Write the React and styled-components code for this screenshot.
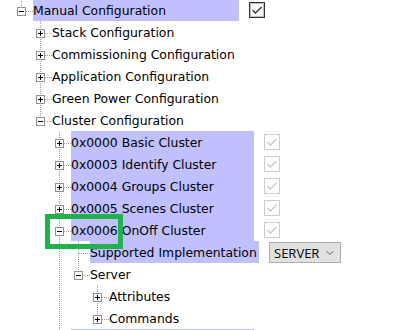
import React from 'react';
import styled, { createGlobalStyle } from 'styled-components';

const GlobalStyle = createGlobalStyle`
html, body {
  margin: 0;
  padding: 0;
  background: #fff;
  overflow: hidden;
}
`;

const Page = styled.div`
position: relative;
width: 404px;
height: 330px;
overflow: hidden;
font-family: "DejaVu Sans", Verdana, sans-serif;
font-size: 12.4px;
color: #000;
`;

const TreeList = styled.div`
display: flex;
flex-direction: column;
margin-top: -1px;
`;

const Row = styled.div`
display: flex;
flex: none;
height: 22px;
padding-left: 12px;
`;

const LineCell = styled.svg`
display: block;
flex: none;
`;

const Label = styled.div`
flex: none;
box-sizing: border-box;
height: 22px;
padding-top: 1px;
line-height: 21px;
white-space: nowrap;
width: ${props => props.$width ? `${props.$width}px` : 'auto'};
background: ${props => props.$width ? '#c0c0ff' : 'transparent'};
`;

const Checkbox = styled.span`
flex: none;
display: flex;
align-items: center;
justify-content: center;
box-sizing: border-box;
width: 16px;
height: 16px;
margin: 3px 0 0 10px;
background: #fff;
border: 1px solid ${props => props.$disabled ? '#cccccc' : '#333333'};
box-shadow: ${props => props.$disabled ? 'none' : 'inset 0 0 0 1px rgba(0, 0, 0, 0.25)'};
`;

const Select = styled.div`
flex: none;
display: flex;
align-items: center;
box-sizing: border-box;
width: 72px;
height: 21px;
margin: 1px 0 0 10px;
padding: 0 6px 0 4px;
border: 1px solid #adadad;
background: #e1e1e1;
font-family: "Open Sans", "Noto Sans", sans-serif;
font-size: 13px;
`;

const Chevron = styled.svg`
display: block;
margin-left: auto;
`;

const Annotation = styled.div`
position: absolute;
left: 45px;
top: 214px;
width: 78px;
height: 35px;
box-sizing: border-box;
border: 5px solid #22b14c;
pointer-events: none;
`;

// the last cluster row only peeks in at the bottom edge, so its text stays empty
const tree = [
    { label: 'Manual Configuration', hl: 206, check: 'enabled', open: true, children: [
        { label: 'Stack Configuration', closed: true },
        { label: 'Commissioning Configuration', closed: true },
        { label: 'Application Configuration', closed: true },
        { label: 'Green Power Configuration', closed: true },
        { label: 'Cluster Configuration', open: true, children: [
            { label: '0x0000 Basic Cluster', hl: 183, check: 'disabled', closed: true },
            { label: '0x0003 Identify Cluster', hl: 183, check: 'disabled', closed: true },
            { label: '0x0004 Groups Cluster', hl: 183, check: 'disabled', closed: true },
            { label: '0x0005 Scenes Cluster', hl: 183, check: 'disabled', closed: true },
            { label: '0x0006 OnOff Cluster', hl: 183, check: 'disabled', open: true, children: [
                { label: 'Supported Implementation', hl: 169, select: 'SERVER' },
                { label: 'Server', open: true, children: [
                    { label: 'Attributes', closed: true },
                    { label: 'Commands', closed: true },
                ] },
            ] },
            { label: '', hl: 183, closed: true },
        ] },
    ] },
];

function flatten(nodes, guides = [], out = []) {
    nodes.forEach((node, i) => {
        const last = i === nodes.length - 1;
        out.push({ ...node, guides, last });
        if (node.open && node.children) {
            flatten(node.children, [...guides, !last], out);
        }
    });
    return out;
}

// dotted tree connector, optionally with the +/- box
function Lines({ up, down, right, expander }) {
    const dot = { stroke: '#a0a0a0', strokeDasharray: '1 1', shapeRendering: 'crispEdges' };
    return (
        <LineCell width={right ? 21 : 19} height="22">
            {(up || down) && (
                <line x1="9.5" y1={up ? 0 : 12} x2="9.5" y2={down ? 22 : 12} {...dot} />
            )}
            {right && <line x1="10" y1="12.5" x2="21" y2="12.5" {...dot} />}
            {expander && (
                <g shapeRendering="crispEdges">
                    <rect x="5.5" y="8.5" width="8" height="8" fill="#fff" stroke="#919191" />
                    <line x1="7" y1="12.5" x2="12" y2="12.5" stroke="#000" />
                    {expander === 'plus' && <line x1="9.5" y1="10" x2="9.5" y2="15" stroke="#000" />}
                </g>
            )}
        </LineCell>
    );
}

function Check({ disabled }) {
    return (
        <Checkbox $disabled={disabled}>
            <svg width="16" height="16" style={{ marginLeft: -1, marginTop: -1 }}>
                <polyline
                    points="3.5,8 6.5,11 12.5,5"
                    fill="none"
                    stroke={disabled ? '#c8c8c8' : '#333'}
                    strokeWidth="1.3"
                />
            </svg>
        </Checkbox>
    );
}

function App() {
    const rows = flatten(tree);

    return (
        <Page>
            <GlobalStyle />
            <TreeList>
                {rows.map((row, idx) => (
                    <Row key={idx}>
                        {row.guides.map((g, k) => <Lines key={k} up={g} down={g} />)}
                        <Lines
                            up
                            down={!row.last}
                            right
                            expander={row.open ? 'minus' : row.closed ? 'plus' : null}
                        />
                        <Label $width={row.hl}>{row.label}</Label>
                        {row.check && <Check disabled={row.check === 'disabled'} />}
                        {row.select && (
                            <Select>
                                <span>{row.select}</span>
                                <Chevron width="8" height="6">
                                    <polyline points="0.5,1 4,4.5 7.5,1" fill="none" stroke="#666" />
                                </Chevron>
                            </Select>
                        )}
                    </Row>
                ))}
            </TreeList>
            <Annotation />
        </Page>
    );
}

export default App;
